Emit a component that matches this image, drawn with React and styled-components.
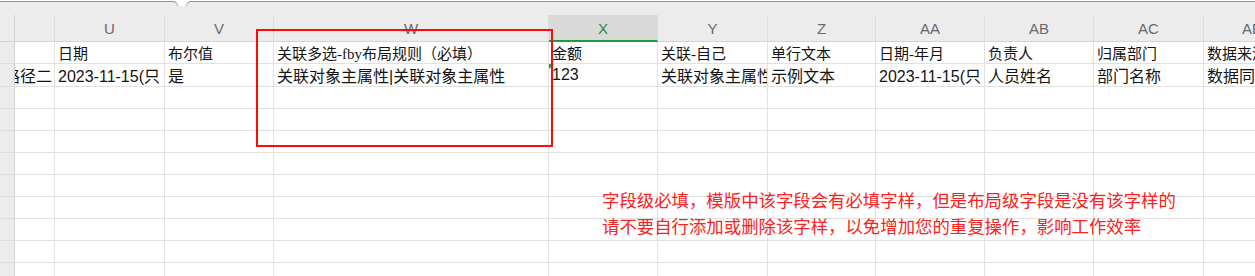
import React from 'react';
import styled, { createGlobalStyle, css } from 'styled-components';

const GlobalStyle = createGlobalStyle`
  html, body {
    margin: 0;
    padding: 0;
    background: #ffffff;
  }
`;

// column letters from T (scrolled, label out of view) to AD
const COLS = ['', 'U', 'V', 'W', 'X', 'Y', 'Z', 'AA', 'AB', 'AC', 'AD'];
const WIDTHS = [15, 40, 110, 109, 275, 109, 110, 108, 109, 109, 110, 98];
const ACTIVE_COL = 'X';

const FIELDS = ['', '日期', '布尔值', '关联多选-fby布局规则（必填）', '金额', '关联-自己', '单行文本', '日期-年月', '负责人', '归属部门', '数据来源'];
const SAMPLE = ['路径二', '2023-11-15(只', '是', '关联对象主属性|关联对象主属性', '123', '关联对象主属性', '示例文本', '2023-11-15(只', '人员姓名', '部门名称', '数据同步'];
const EMPTY_ROWS = 9;

const Page = styled.div`
  position: relative;
  width: 1255px;
  height: 276px;
  overflow: hidden;
  background: #ffffff;
`;

const TopStrip = styled.div`
  height: 15px;
  display: flex;
  flex-direction: column;
  background: #ffffff;
`;

const TabRow = styled.div`
  height: 5px;
  padding-top: 1px;
  display: flex;
  gap: 8px;
`;

const Tab = styled.div`
  height: 4px;
  background: #ececec;
  border-top: 1px solid #8f8f8f;
  ${(p) => p.$side === 'left' ? css`
    width: 177px;
    border-right: 1px solid #a8a8a8;
    border-top-right-radius: 6px;
  ` : css`
    flex: 1;
    border-left: 1px solid #a8a8a8;
    border-top-left-radius: 6px;
  `}
`;

const StripFill = styled.div`
  flex: 1;
  background: #ececec;
`;

const Sheet = styled.div`
  display: grid;
  width: max-content;
  grid-template-columns: ${WIDTHS.map((w) => w + 'px').join(' ')};
  grid-template-rows: 27px 22px 23px;
  grid-auto-rows: 22px;
`;

const ColHead = styled.div`
  box-sizing: border-box;
  display: flex;
  align-items: center;
  justify-content: center;
  background: #ececec;
  border-right: 1px solid #dcdcdc;
  border-bottom: 1px solid #d4d4d4;
  font-family: "Liberation Sans", Arial, sans-serif;
  font-size: 15px;
  color: #6a6a6a;
  padding-top: 1px;
  ${(p) => p.$corner && css`
    border-right-color: #d2d2d2;
  `}
  ${(p) => p.$active && css`
    background: #d9d9d9;
    color: #1f8b3b;
    border-bottom: 2px solid #1f9a3e;
  `}
`;

const RowHead = styled.div`
  box-sizing: border-box;
  background: #ececec;
  border-right: 1px solid #d2d2d2;
  border-bottom: 1px solid #dedede;
`;

const Cell = styled.div`
  position: relative;
  box-sizing: border-box;
  display: flex;
  align-items: center;
  justify-content: ${(p) => (p.$clipLeft ? 'flex-end' : 'flex-start')};
  padding: ${(p) => (p.$clipLeft ? '0 2px 0 0' : '0 0 0 3px')};
  border-right: 1px solid #e1e1e1;
  border-bottom: 1px solid #e1e1e1;
  overflow: hidden;
  white-space: nowrap;
  color: #141414;
  font-size: ${(p) => (p.$field ? '15px' : '16px')};
  font-family: ${(p) => p.$field
    ? '"Liberation Serif", "Noto Sans CJK SC", serif'
    : '"Liberation Sans", "Noto Sans CJK SC", sans-serif'};
  ${(p) => p.$comment && css`
    &::before {
      content: '';
      position: absolute;
      top: 0;
      left: 0;
      border-top: 5px solid #2a9a3c;
      border-right: 5px solid transparent;
    }
  `}
`;

const Highlight = styled.div`
  position: absolute;
  left: 256px;
  top: 29px;
  width: 297px;
  height: 118px;
  box-sizing: border-box;
  border: 2px solid #ff0a0a;
  pointer-events: none;
`;

const Note = styled.div`
  position: absolute;
  left: 602px;
  top: 187px;
  font-family: "Noto Sans CJK SC", sans-serif;
  font-size: 17.4px;
  line-height: 26px;
  color: #ff2020;
  white-space: nowrap;
`;

function DataRow({ values, field, comment }) {
  return (
    <>
      <RowHead />
      {values.map((v, i) => (
        <Cell
          key={i}
          $field={field}
          $clipLeft={i === 0 && !field}
          $comment={comment && COLS[i] === ACTIVE_COL}
        >
          {v}
        </Cell>
      ))}
    </>
  );
}

export default function App() {
  return (
    <Page>
      <GlobalStyle />
      <TopStrip>
        <TabRow>
          <Tab $side="left" />
          <Tab $side="right" />
        </TabRow>
        <StripFill />
      </TopStrip>

      <Sheet>
        <ColHead $corner />
        {COLS.map((c, i) => (
          <ColHead key={'h' + i} $active={c === ACTIVE_COL}>{c}</ColHead>
        ))}
        <DataRow values={FIELDS} field />
        <DataRow values={SAMPLE} comment />
        {Array.from({ length: EMPTY_ROWS }).map((_, r) => (
          <DataRow key={r} values={Array(11).fill('')} />
        ))}
      </Sheet>

      <Highlight />
      <Note>
        <div>字段级必填，模版中该字段会有必填字样，但是布局级字段是没有该字样的</div>
        <div>请不要自行添加或删除该字样，以免增加您的重复操作，影响工作效率</div>
      </Note>
    </Page>
  );
}
